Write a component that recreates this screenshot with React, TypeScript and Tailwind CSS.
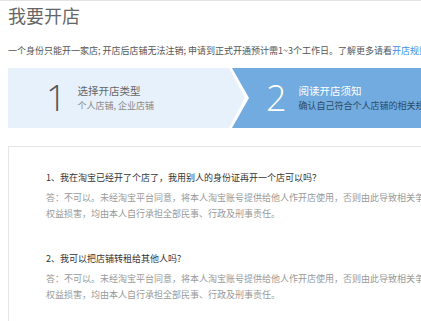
const cjk = "font-['Noto_Sans_CJK_SC','Noto_Sans',sans-serif]";

const faqs = [
  {
    q: "1、我在淘宝已经开了个店了，我用别人的身份证再开一个店可以吗？",
    a: "答：不可以。未经淘宝平台同意，将本人淘宝账号提供给他人作开店使用，否则由此导致相关争议、诉讼及因此对本人及他人造成的权益损害，均由本人自行承担全部民事、行政及刑事责任。",
  },
  {
    q: "2、我可以把店铺转租给其他人吗?",
    a: "答：不可以。未经淘宝平台同意，将本人淘宝账号提供给他人作开店使用，否则由此导致相关争议、诉讼及因此对本人及他人造成的权益损害，均由本人自行承担全部民事、行政及刑事责任。",
  },
];

function Steps() {
  return (
    <div className="flex h-[60px] bg-[#71abdf]">
      {/* step 1 with white chevron edge */}
      <div className="w-[244px] shrink-0 bg-white [clip-path:polygon(0_0,224px_0,241px_50%,224px_100%,0_100%)]">
        <div className="flex h-full items-center pl-[38px] bg-[#e6f1fb] [clip-path:polygon(0_0,221px_0,237px_50%,221px_100%,0_100%)]">
          <span className="font-['Open_Sans',sans-serif] font-light text-[36px] leading-none text-[#555]">
            1
          </span>
          <div className={`ml-[11px] flex flex-col ${cjk}`}>
            <span className="text-[10.5px] leading-[15px] text-[#666]">选择开店类型</span>
            <span className="text-[9px] leading-[15px] text-[#888]">个人店铺, 企业店铺</span>
          </div>
        </div>
      </div>
      {/* step 2 */}
      <div className="flex items-center pl-[14px]">
        <span className="font-['Open_Sans',sans-serif] font-light text-[36px] leading-none text-white">
          2
        </span>
        <div className={`ml-[12px] flex flex-col whitespace-nowrap ${cjk}`}>
          <span className="text-[10.5px] leading-[15px] text-white">阅读开店须知</span>
          <span className="text-[9px] leading-[15px] text-[#2b4a66]">
            确认自己符合个人店铺的相关规定
          </span>
        </div>
      </div>
    </div>
  );
}

export default function App() {
  return (
    <div className={`w-[421px] h-[321px] overflow-hidden bg-white border-t border-[#e3e3e3] ${cjk}`}>
      <div className="w-[760px] pl-[8px]">
        <h1 className="pt-[2px] text-[18px] leading-[24px] text-[#666]">我要开店</h1>
        <p className="mt-[17px] whitespace-nowrap text-[9px] leading-[14px] text-[#555]">
          一个身份只能开一家店; 开店后店铺无法注销; 申请到正式开通预计需1~3个工作日。了解更多请看
          <span className="text-[#3a8ee6]">开店规则</span>
        </p>
        <div className="mt-[10px]">
          <Steps />
        </div>
        <div className="mt-[18px] h-[400px] border border-[#e6e6e6] pl-[37px] pt-[23px]">
          {faqs.map((f, i) => (
            <div key={i} className={i > 0 ? "mt-[29px]" : ""}>
              <p className="text-[9px] leading-[16px] text-[#333]">{f.q}</p>
              <p className="mt-[4px] w-[526px] text-[9px] leading-[16px] text-[#999]">{f.a}</p>
            </div>
          ))}
        </div>
      </div>
    </div>
  );
}
